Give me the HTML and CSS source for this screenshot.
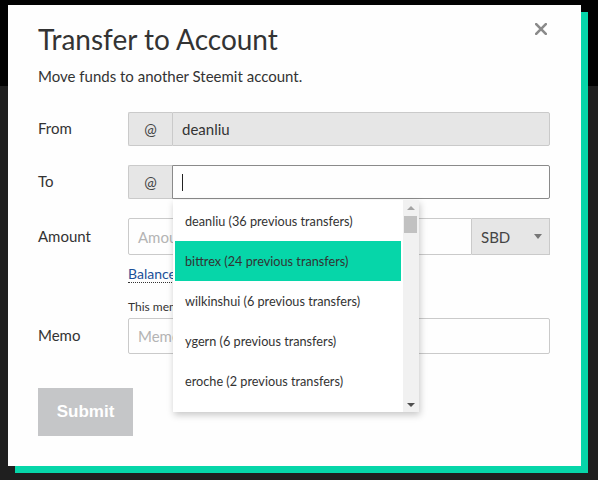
FILE: index.html
```html
<!DOCTYPE html>
<html lang="en">
<head>
<meta charset="utf-8">
<title>Transfer to Account</title>
<link rel="stylesheet" href="styles.css">
</head>
<body>
<div class="page">
  <div class="topbar"></div>
  <div class="backdrop"></div>
</div>
<div class="modal">
  <button class="close" aria-label="Close">
    <svg width="12" height="12" viewBox="0 0 12 12"><path d="M1.2 1.2 L10.8 10.8 M10.8 1.2 L1.2 10.8" stroke="#8a8a8a" stroke-width="2.6" stroke-linecap="square"/></svg>
  </button>
  <h1 class="title">Transfer to Account</h1>
  <p class="subtitle">Move funds to another Steemit account.</p>

  <div class="row row-from">
    <span class="label">From</span>
    <div class="group">
      <span class="addon">@</span>
      <span class="input input-disabled">deanliu</span>
    </div>
  </div>

  <div class="row row-to">
    <span class="label">To</span>
    <div class="group group-to">
      <span class="addon">@</span>
      <span class="input input-focus"><span class="caret"></span></span>
      <div class="dropdown">
        <ul class="options">
          <li class="option">deanliu (36 previous transfers)</li>
          <li class="option option-active">bittrex (24 previous transfers)</li>
          <li class="option">wilkinshui (6 previous transfers)</li>
          <li class="option">ygern (6 previous transfers)</li>
          <li class="option">eroche (2 previous transfers)</li>
        </ul>
        <div class="scrollbar">
          <span class="arrow arrow-up"></span>
          <span class="thumb"></span>
          <span class="track"></span>
          <span class="arrow arrow-down"></span>
        </div>
      </div>
    </div>
  </div>

  <div class="row row-amount">
    <span class="label">Amount</span>
    <div class="group">
      <span class="input input-amount placeholder">Amount</span>
      <span class="select">SBD<span class="select-arrow"></span></span>
    </div>
  </div>
  <div class="hint-row"><a class="balance">Balance</a></div>
  <div class="note-row">This memo</div>

  <div class="row row-memo">
    <span class="label">Memo</span>
    <div class="group">
      <span class="input input-memo placeholder">Memo</span>
    </div>
  </div>

  <button class="submit">Submit</button>
</div>
</body>
</html>
```
FILE: styles.css
```css
html, body {
  margin: 0;
  padding: 0;
}
body {
  width: 598px;
  height: 480px;
  overflow: hidden;
  background: #1f1f1f;
  font-family: Lato, "Open Sans", sans-serif;
}
.page {
  display: flex;
  flex-direction: column;
  height: 480px;
}
.topbar {
  height: 86px;
  background: #020202;
}
.backdrop {
  flex: 1;
  background: #1f1f1f;
}
.modal {
  position: absolute;
  left: 8px;
  top: 5px;
  width: 573px;
  height: 461px;
  box-sizing: border-box;
  padding: 18px 31px 0 30px;
  background: #fefefe;
  box-shadow: 7px 7px 0 #06d6a9;
  color: #333;
}
.close {
  position: absolute;
  left: 527px;
  top: 18px;
  width: 12px;
  height: 12px;
  padding: 0;
  border: 0;
  background: none;
  display: block;
}
.close svg {
  display: block;
}
.title {
  margin: 0;
  font-size: 28px;
  line-height: 32px;
  font-weight: 400;
  color: #333;
}
.subtitle {
  margin: 11px 0 0;
  font-size: 15px;
  line-height: 20px;
  color: #333;
}
.row {
  display: grid;
  grid-template-columns: 90px 422px;
  align-items: center;
}
.row-from { margin-top: 26px; }
.row-to { margin-top: 19px; }
.row-amount { margin-top: 19px; }
.label {
  font-size: 15px;
  color: #333;
  margin-top: -2px;
}
.group {
  display: flex;
  height: 34px;
  position: relative;
}
.addon {
  width: 44px;
  box-sizing: border-box;
  border: 1px solid #cacaca;
  border-right: 0;
  background: #e6e6e6;
  display: flex;
  align-items: center;
  justify-content: center;
  font-size: 15px;
  color: #444;
  border-radius: 2px 0 0 2px;
}
.input {
  flex: 1;
  box-sizing: border-box;
  border: 1px solid #cacaca;
  display: flex;
  align-items: center;
  padding-left: 9px;
  font-size: 15px;
  color: #333;
  background: #fefefe;
  border-radius: 0 2px 2px 0;
}
.input-disabled {
  background: #e6e6e6;
}
.input-focus {
  border-color: #8a8a8a;
}
.caret {
  width: 1px;
  height: 17px;
  background: #222;
}
.row-amount .group { height: 37px; }
.input-amount {
  border-radius: 2px 0 0 2px;
}
.placeholder {
  color: #b4b4b4;
}
.select {
  width: 78px;
  box-sizing: border-box;
  border: 1px solid #cacaca;
  border-left: 0;
  background: #e6e6e6;
  display: flex;
  align-items: center;
  justify-content: space-between;
  padding: 0 7px 0 9px;
  font-size: 15px;
  color: #444;
}
.select-arrow {
  width: 0;
  height: 0;
  border-left: 4px solid transparent;
  border-right: 4px solid transparent;
  border-top: 5px solid #777;
}
.hint-row {
  margin: 9px 0 0 90px;
  line-height: 18px;
  height: 18px;
}
.balance {
  font-size: 14px;
  color: #1a5099;
  text-decoration: none;
  border-bottom: 1px dotted #333;
  padding-bottom: 0;
}
.note-row {
  margin: 17px 0 0 90px;
  font-size: 12px;
  line-height: 16px;
  color: #333;
}
.row-memo { margin-top: 3px; }
.row-memo .group { height: 36px; }
.input-memo { border-radius: 2px; }
.submit {
  display: block;
  margin-top: 34px;
  width: 95px;
  height: 48px;
  border: 0;
  padding: 0;
  background: #c5c6c8;
  color: #fff;
  font-family: "Liberation Sans", Arial, sans-serif;
  font-weight: 700;
  font-size: 17px;
}

/* autocomplete dropdown */
.dropdown {
  position: absolute;
  left: 45px;
  top: 35px;
  width: 246px;
  height: 212px;
  background: #fff;
  display: flex;
  box-shadow: 1px 3px 7px rgba(0, 0, 0, 0.22);
  z-index: 5;
  overflow: hidden;
}
.options {
  flex: 1;
  list-style: none;
  margin: 0;
  padding: 1px 2px 0 2px;
}
.option {
  height: 40px;
  line-height: 40px;
  padding-left: 10px;
  font-size: 12.7px;
  color: #333;
  white-space: nowrap;
}
.option-active {
  background: #06d6a9;
}
.scrollbar {
  width: 16px;
  background: #f1f1f1;
  display: flex;
  flex-direction: column;
  align-items: center;
  padding: 6px 1px 5px 0;
  box-sizing: border-box;
}
.arrow {
  width: 0;
  height: 0;
  border-left: 4px solid transparent;
  border-right: 4px solid transparent;
}
.arrow-up {
  border-bottom: 4px solid #a3a3a3;
}
.arrow-down {
  border-top: 4px solid #505050;
}
.thumb {
  margin-top: 6px;
  width: 13px;
  height: 17px;
  background: #c1c1c1;
}
.track {
  flex: 1;
}
```
